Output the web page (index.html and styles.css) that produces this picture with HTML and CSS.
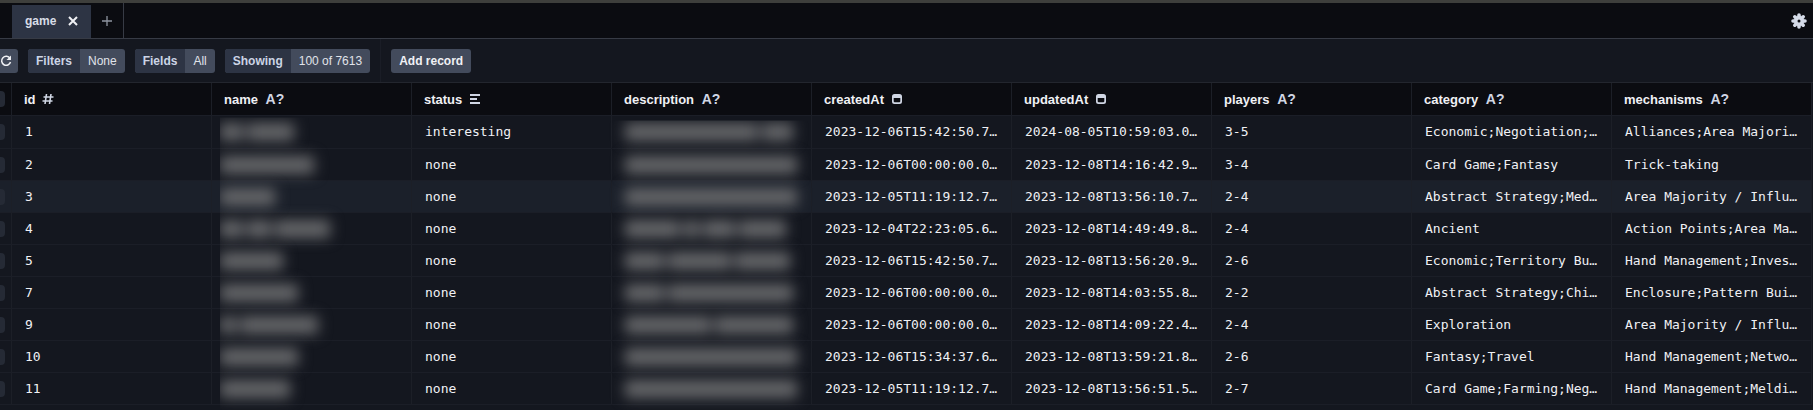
FILE: index.html
```
<!DOCTYPE html>
<html lang="en">

<head>
  <meta charset="UTF-8">
  <meta name="viewport" content="width=device-width, initial-scale=1.0">
  <title>game</title>
  <link rel="stylesheet" href="styles.css">
</head>
<body>
  <!-- icons shared by the table header -->
  <svg class="sprite" aria-hidden="true">
    <symbol id="hash" viewBox="0 0 12 12">
      <path d="M4.500 1 3 11M9 1 7.500 11M1.500 4h10M.5 8h10" fill="none" stroke="currentColor" stroke-width="1.600"/>
    </symbol>
    <symbol id="enum" viewBox="0 0 12 12">
      <path d="M1 2h10M1 6h7M1 10h10" fill="none" stroke="currentColor" stroke-width="2"/>
    </symbol>
    <symbol id="date" viewBox="0 0 12 12">
      <path d="M3.500 1h5A2.500 2.500 0 0 1 11 3.500v5A2.500 2.500 0 0 1 8.500 11h-5A2.500 2.500 0 0 1 1 8.500v-5A2.500 2.500 0 0 1 3.500 1zM2.700 5v3.300a1 1 0 0 0 1 1h4.600a1 1 0 0 0 1-1V5z" fill="currentColor" fill-rule="evenodd"/>
    </symbol>
  </svg>

  <header class="tabs">
    <div class="tab">
      <span>game</span>
      <button class="tab-close" aria-label="Close">
        <svg width="12" height="12" viewBox="0 0 12 12"><path d="M2 2l8 8M10 2l-8 8" fill="none" stroke="currentColor" stroke-width="2"/></svg>
      </button>
    </div>
    <button class="tab-add" aria-label="New tab">
      <svg width="12" height="12" viewBox="0 0 12 12"><path d="M6 1v10M1 6h10" fill="none" stroke="currentColor" stroke-width="1.300"/></svg>
    </button>
    <button class="settings" aria-label="Settings">
      <svg width="16" height="16" viewBox="0 0 16 16">
        <path d="M8 2v12M2 8h12M3.800 3.800l8.400 8.400M12.200 3.800l-8.400 8.400" stroke="currentColor" stroke-width="3.600" stroke-linecap="round"/>
        <circle cx="8" cy="8" r="5" fill="currentColor"/>
        <circle class="hole" cx="8" cy="8" r="1.500"/>
      </svg>
    </button>
  </header>

  <nav class="toolbar">
    <button class="btn refresh" aria-label="Refresh">
      <svg width="12" height="12" viewBox="0 0 12 12"><path d="M10 3.500A4.500 4.500 0 1 0 10.500 7" fill="none" stroke="currentColor" stroke-width="1.500"/><path d="M11 .5v4.500H6.500z" fill="currentColor"/></svg>
    </button>
    <button class="btn"><span class="label">Filters</span><span class="value">None</span></button>
    <button class="btn"><span class="label">Fields</span><span class="value">All</span></button>
    <button class="btn"><span class="label">Showing</span><span class="value">100 of 7613</span></button>
    <span class="divider"></span>
    <button class="btn add">Add record</button>
  </nav>

  <main class="grid">
    <table>
      <colgroup>
        <col class="col-check">
        <col span="9" class="col-data">
      </colgroup>
      <thead>
        <tr>
          <th class="check"><input type="checkbox" aria-label="Select all"></th>
          <th>id <svg class="type"><use href="#hash"/></svg></th>
          <th>name <span class="type">A?</span></th>
          <th>status <svg class="type"><use href="#enum"/></svg></th>
          <th>description <span class="type">A?</span></th>
          <th>createdAt <svg class="type"><use href="#date"/></svg></th>
          <th>updatedAt <svg class="type"><use href="#date"/></svg></th>
          <th>players <span class="type">A?</span></th>
          <th>category <span class="type">A?</span></th>
          <th>mechanisms <span class="type">A?</span></th>
        </tr>
      </thead>
      <tbody>
        <tr>
          <td class="check"><input type="checkbox" aria-label="Select 1"></td>
          <td>1</td>
          <td class="hidden-name"><div class="words"><i style="width:3ch"></i><i style="width:6ch"></i></div></td>
          <td>interesting</td>
          <td class="hidden-text"><div class="words"><i style="width:17ch"></i><i style="width:4ch"></i></div></td>
          <td>2023-12-06T15:42:50.7…</td>
          <td>2024-08-05T10:59:03.0…</td>
          <td>3-5</td>
          <td>Economic;Negotiation;…</td>
          <td>Alliances;Area Majori…</td>
        </tr>
        <tr>
          <td class="check"><input type="checkbox" aria-label="Select 2"></td>
          <td>2</td>
          <td class="hidden-name"><div class="words"><i style="width:12ch"></i></div></td>
          <td>none</td>
          <td class="hidden-text"><div class="words"><i style="width:22ch"></i></div></td>
          <td>2023-12-06T00:00:00.0…</td>
          <td>2023-12-08T14:16:42.9…</td>
          <td>3-4</td>
          <td>Card Game;Fantasy</td>
          <td>Trick-taking</td>
        </tr>
        <tr class="hover">
          <td class="check"><input type="checkbox" aria-label="Select 3"></td>
          <td>3</td>
          <td class="hidden-name"><div class="words"><i style="width:7ch"></i></div></td>
          <td>none</td>
          <td class="hidden-text"><div class="words"><i style="width:22ch"></i></div></td>
          <td>2023-12-05T11:19:12.7…</td>
          <td>2023-12-08T13:56:10.7…</td>
          <td>2-4</td>
          <td>Abstract Strategy;Med…</td>
          <td>Area Majority / Influ…</td>
        </tr>
        <tr>
          <td class="check"><input type="checkbox" aria-label="Select 4"></td>
          <td>4</td>
          <td class="hidden-name"><div class="words"><i style="width:3ch"></i><i style="width:3ch"></i><i style="width:7ch"></i></div></td>
          <td>none</td>
          <td class="hidden-text"><div class="words"><i style="width:7ch"></i><i style="width:2ch"></i><i style="width:4ch"></i><i style="width:6ch"></i></div></td>
          <td>2023-12-04T22:23:05.6…</td>
          <td>2023-12-08T14:49:49.8…</td>
          <td>2-4</td>
          <td>Ancient</td>
          <td>Action Points;Area Ma…</td>
        </tr>
        <tr>
          <td class="check"><input type="checkbox" aria-label="Select 5"></td>
          <td>5</td>
          <td class="hidden-name"><div class="words"><i style="width:8ch"></i></div></td>
          <td>none</td>
          <td class="hidden-text"><div class="words"><i style="width:5ch"></i><i style="width:8ch"></i><i style="width:7ch"></i></div></td>
          <td>2023-12-06T15:42:50.7…</td>
          <td>2023-12-08T13:56:20.9…</td>
          <td>2-6</td>
          <td>Economic;Territory Bu…</td>
          <td>Hand Management;Inves…</td>
        </tr>
        <tr>
          <td class="check"><input type="checkbox" aria-label="Select 7"></td>
          <td>7</td>
          <td class="hidden-name"><div class="words"><i style="width:10ch"></i></div></td>
          <td>none</td>
          <td class="hidden-text"><div class="words"><i style="width:5ch"></i><i style="width:16ch"></i></div></td>
          <td>2023-12-06T00:00:00.0…</td>
          <td>2023-12-08T14:03:55.8…</td>
          <td>2-2</td>
          <td>Abstract Strategy;Chi…</td>
          <td>Enclosure;Pattern Bui…</td>
        </tr>
        <tr>
          <td class="check"><input type="checkbox" aria-label="Select 9"></td>
          <td>9</td>
          <td class="hidden-name"><div class="words"><i style="width:2ch"></i><i style="width:10ch"></i></div></td>
          <td>none</td>
          <td class="hidden-text"><div class="words"><i style="width:11ch"></i><i style="width:10ch"></i></div></td>
          <td>2023-12-06T00:00:00.0…</td>
          <td>2023-12-08T14:09:22.4…</td>
          <td>2-4</td>
          <td>Exploration</td>
          <td>Area Majority / Influ…</td>
        </tr>
        <tr>
          <td class="check"><input type="checkbox" aria-label="Select 10"></td>
          <td>10</td>
          <td class="hidden-name"><div class="words"><i style="width:10ch"></i></div></td>
          <td>none</td>
          <td class="hidden-text"><div class="words"><i style="width:22ch"></i></div></td>
          <td>2023-12-06T15:34:37.6…</td>
          <td>2023-12-08T13:59:21.8…</td>
          <td>2-6</td>
          <td>Fantasy;Travel</td>
          <td>Hand Management;Netwo…</td>
        </tr>
        <tr>
          <td class="check"><input type="checkbox" aria-label="Select 11"></td>
          <td>11</td>
          <td class="hidden-name"><div class="words"><i style="width:9ch"></i></div></td>
          <td>none</td>
          <td class="hidden-text"><div class="words"><i style="width:22ch"></i></div></td>
          <td>2023-12-05T11:19:12.7…</td>
          <td>2023-12-08T13:56:51.5…</td>
          <td>2-7</td>
          <td>Card Game;Farming;Neg…</td>
          <td>Hand Management;Meldi…</td>
        </tr>
      </tbody>
    </table>
  </main>
</body>
</html>
```

FILE: styles.css
```
* {
  box-sizing: border-box;
}

body {
  margin: 0;
  min-height: 100vh;
  overflow: hidden;
  border-top: 3px solid #3e3f3c;
  background: #14171f;
  color: #f0f1f5;
  font-family: "Liberation Sans", Arial, sans-serif;
  font-size: 12px;
}

button {
  border: 0;
  padding: 0;
  background: none;
  color: inherit;
  font: inherit;
}

svg {
  display: block;
}

.sprite {
  display: none;
}

/* tabs */
.tabs {
  display: flex;
  height: 36px;
  padding-left: 12px;
  border-bottom: 1px solid #373b45;
  background: #0b0c11;
}

.tab {
  display: flex;
  align-items: center;
  gap: 11px;
  margin-top: 2px;
  padding: 0 12px 2px 13px;
  background: #2d3444;
  color: #d8dce6;
  font-weight: bold;
}

.tab-close {
  color: #f0f1f5;
}

.tab-add {
  padding: 0 10px;
  border-right: 1px solid #373b45;
  color: #8f94a0;
}

.settings {
  margin-left: auto;
  padding: 0 6px;
  color: #d5dbe8;
}

.hole {
  fill: #0b0c11;
}

/* toolbar */
.toolbar {
  display: flex;
  align-items: center;
  gap: 10px;
  height: 43px;
  margin-left: -6px;
}

.btn {
  display: flex;
  height: 24px;
  border-radius: 3px;
  overflow: hidden;
  background: #434b5c;
  line-height: 24px;
}

.refresh {
  align-items: center;
  padding: 0 6px;
}

.label {
  padding: 0 8px;
  background: #2d3444;
  color: #ccd4e6;
  font-weight: bold;
}

.value {
  padding: 0 8px;
  color: #e0e3ea;
}

.add {
  padding: 0 8px;
  font-weight: bold;
}

.divider {
  width: 1px;
  align-self: stretch;
  background: #1a1d26;
}

/* table */
.grid {
  margin-left: -24px;
  border-top: 1px solid #23262e;
}

table {
  width: 1836px;
  table-layout: fixed;
  border-collapse: separate;
  border-spacing: 0;
}

.col-check {
  width: 36px;
}

.col-data {
  width: 200px;
}

th,
td {
  height: 32px;
  padding: 0 12px;
  border-right: 1px solid #1c1f27;
  border-bottom: 1px solid #1b1e27;
  text-align: left;
  white-space: nowrap;
}

th {
  height: 33px;
  background: #0b0c11;
  font-size: 13px;
}

td {
  padding-left: 13px;
  overflow: hidden;
  text-overflow: ellipsis;
  font-family: "DejaVu Sans Mono", monospace;
  font-size: 13px;
}

tbody tr:first-child td {
  height: 33px;
  padding-bottom: 1px;
}

.hover td {
  background: #1b202a;
}

.type {
  display: inline-block;
  margin-left: 4px;
  color: #d0d6e4;
  font-size: 14px;
  line-height: 14px;
}

svg.type {
  width: 12px;
  height: 12px;
  margin-left: 3px;
  vertical-align: -1px;
}

.check {
  padding: 0 0 0 13px;
}

.check input {
  appearance: none;
  display: block;
  width: 16px;
  height: 16px;
  margin: 0;
  border-radius: 4px;
  background: #252a35;
}

/* blurred out cells */
.hidden-name,
.hidden-text {
  overflow: visible;
}

.hidden-name {
  padding-left: 8px;
}

.words {
  display: flex;
  gap: 4px;
  filter: blur(7px);
}

.words i {
  height: 18px;
  background: #66676a;
}

/* the name blur is cut off at its left edge */
.hidden-name .words {
  clip-path: inset(-20px -20px -20px 0);
}

tbody tr:first-child .hidden-name .words {
  clip-path: inset(-5px -20px -20px 0);
}

tbody tr:first-child .hidden-text .words {
  clip-path: inset(-2px -20px -20px -20px);
}
```
